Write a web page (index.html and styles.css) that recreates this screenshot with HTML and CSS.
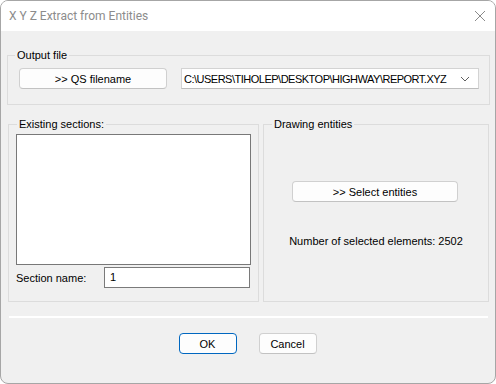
FILE: index.html
```html
<!DOCTYPE html>
<html lang="en">
<head>
    <meta charset="UTF-8">
    <title>X Y Z Extract from Entities</title>
    <link rel="stylesheet" href="styles.css">
</head>
<body>
    <div class="window">
        <div class="titlebar">
            <span class="title">X Y Z Extract from Entities</span>
            <svg class="close" width="12" height="12" viewBox="0 0 12 12">
                <path d="M1 1 L11 11 M11 1 L1 11" stroke="#8a8a8a" stroke-width="1" fill="none"/>
            </svg>
        </div>

        <div class="content">
            <fieldset class="group group-output">
                <legend class="legend-output">Output file</legend>
                <button class="btn btn-qs">&gt;&gt; QS filename</button>
                <div class="combo">
                    <span class="combo-text">C:\USERS\TIHOLEP\DESKTOP\HIGHWAY\REPORT.XYZ</span>
                    <svg class="chevron" width="10" height="6" viewBox="0 0 10 6">
                        <path d="M1 1 L5 5 L9 1" stroke="#606060" stroke-width="1" fill="none"/>
                    </svg>
                </div>
            </fieldset>

            <div class="row">
                <fieldset class="group group-sections">
                    <legend class="legend-sections">Existing sections:</legend>
                    <div class="listbox"></div>
                    <div class="field">
                        <label class="field-label">Section name:</label>
                        <div class="textbox">1</div>
                    </div>
                </fieldset>

                <fieldset class="group group-entities">
                    <legend class="legend-entities">Drawing entities</legend>
                    <button class="btn btn-select">&gt;&gt; Select entities</button>
                    <p class="count">Number of selected elements: 2502</p>
                </fieldset>
            </div>

            <div class="separator"></div>

            <div class="actions">
                <button class="btn btn-action btn-default">OK</button>
                <button class="btn btn-action">Cancel</button>
            </div>
        </div>
    </div>
</body>
</html>
```
FILE: styles.css
```css
body {
    margin: 0;
    background: #ffffff;
    font-family: "Liberation Sans", Arial, sans-serif;
    font-size: 11px;
    color: #000;
}
.window {
    width: 496px;
    height: 384px;
    box-sizing: border-box;
    border: 1px solid #a6a6a6;
    border-radius: 8px;
    background: #f0f0f0;
    overflow: hidden;
}
.titlebar {
    height: 30px;
    background: #ffffff;
    display: flex;
    align-items: center;
    justify-content: space-between;
    padding: 0 9px 0 8px;
}
.title {
    font-family: Roboto, "Liberation Sans", sans-serif;
    font-size: 12px;
    color: #8c8c8c;
}
.close {
    display: block;
}
.content {
    padding: 0 5px 0 6px;
}
.group {
    margin: 0;
    border: 1px solid #dcdcdc;
    min-width: 0;
}
.group legend {
    padding: 0 2px;
    line-height: 14px;
}
.group-output {
    margin-top: 17px;
    padding: 6px 10px 15px 11px;
    display: flex;
    gap: 14px;
}
.legend-output {
    margin-left: -4px;
}
.btn {
    font-family: "Liberation Sans", Arial, sans-serif;
    font-size: 11px;
    color: #000;
    height: 21px;
    padding: 0;
    background: #fdfdfd;
    border: 1px solid #d0d0d0;
    border-bottom-color: #c2c2c2;
    border-radius: 4px;
}
.btn-qs {
    width: 148px;
}
.combo {
    width: 298px;
    height: 21px;
    box-sizing: border-box;
    background: #fff;
    border: 1px solid #d3d3d3;
    border-bottom-color: #bdbdbd;
    display: flex;
    align-items: center;
    justify-content: space-between;
    padding: 0 8px 0 2px;
}
.combo-text {
    letter-spacing: -0.5px;
}
.chevron {
    display: block;
}
.row {
    display: flex;
    gap: 4px;
    margin: 12px 1px 0 1px;
}
.group-sections {
    width: 251px;
    box-sizing: border-box;
    padding: 3px 7px 13px 7px;
}
.legend-sections {
    margin-left: 1px;
}
.listbox {
    height: 131px;
    box-sizing: border-box;
    background: #fff;
    border: 1px solid #787878;
}
.field {
    display: flex;
    align-items: center;
    margin-top: 2px;
    margin-right: 1px;
}
.field-label {
    width: 88px;
}
.textbox {
    flex: 1;
    height: 21px;
    box-sizing: border-box;
    background: #fff;
    border: 1px solid #7a7a7a;
    padding: 3px 5px;
    line-height: 13px;
}
.group-entities {
    flex: 1;
    padding: 50px 0 0 0;
    display: flex;
    flex-direction: column;
    align-items: center;
}
.legend-entities {
    margin-left: 8px;
}
.btn-select {
    width: 166px;
    margin-left: -2px;
}
.count {
    margin: 32px 0 0 0;
    line-height: 14px;
}
.separator {
    height: 2px;
    background: #ffffff;
    margin: 14px 2px 0 2px;
}
.actions {
    display: flex;
    justify-content: center;
    gap: 22px;
    margin: 15px 2px 0 0;
}
.btn-action {
    width: 58px;
}
.btn-default {
    border-color: #0067c0;
}
```
